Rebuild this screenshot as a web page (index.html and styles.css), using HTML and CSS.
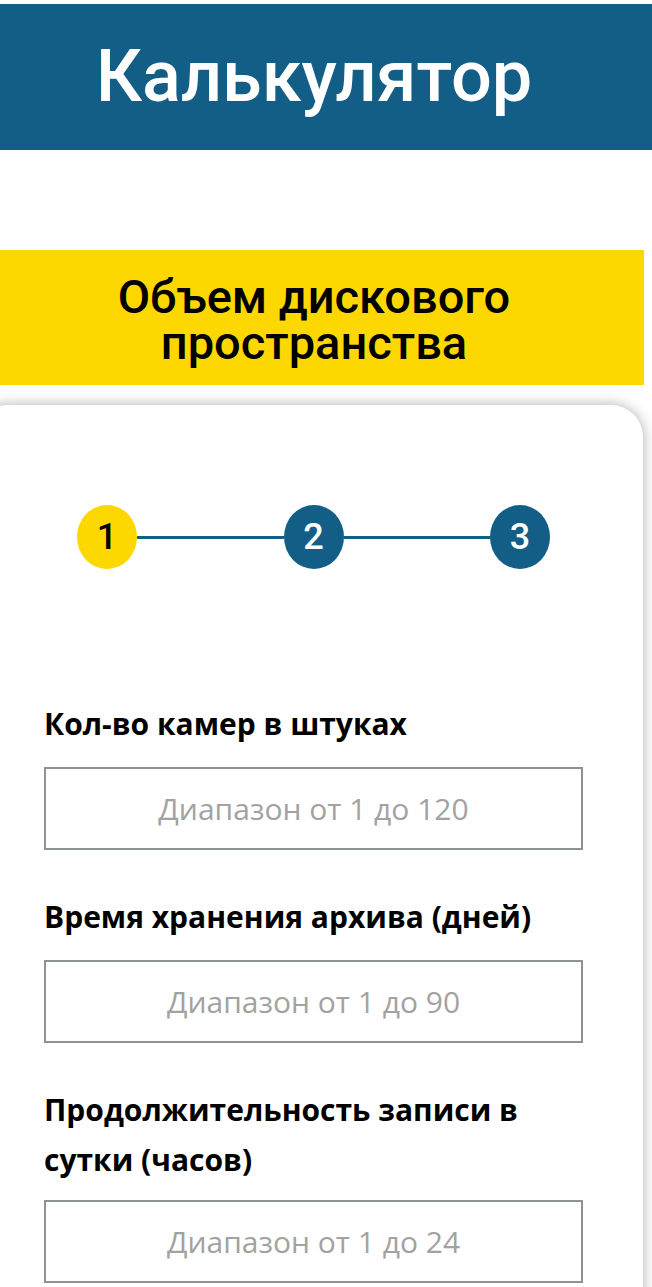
FILE: index.html
```html
<!DOCTYPE html>
<html lang="ru">
<head>
<meta charset="utf-8">
<title>Калькулятор</title>
<link rel="stylesheet" href="styles.css">
</head>
<body>
<header class="topbar">
  <h1 class="topbar__title">Калькулятор</h1>
</header>
<section class="banner">
  <h2 class="banner__title">Объем дискового<br>пространства</h2>
</section>
<main class="card">
  <div class="steps">
    <span class="step step--active">1</span>
    <span class="step__line"></span>
    <span class="step">2</span>
    <span class="step__line"></span>
    <span class="step">3</span>
  </div>
  <form class="form">
    <div class="field">
      <label class="field__label" for="cams">Кол-во камер в штуках</label>
      <input class="field__input" id="cams" type="text" placeholder="Диапазон от 1 до 120">
    </div>
    <div class="field">
      <label class="field__label" for="days">Время хранения архива (дней)</label>
      <input class="field__input" id="days" type="text" placeholder="Диапазон от 1 до 90">
    </div>
    <div class="field">
      <label class="field__label" for="hours">Продолжительность записи в сутки (часов)</label>
      <input class="field__input" id="hours" type="text" placeholder="Диапазон от 1 до 24">
    </div>
  </form>
</main>
</body>
</html>
```
FILE: styles.css
```css
* { box-sizing: border-box; }
html, body { margin: 0; padding: 0; background: #ffffff; overflow: hidden; }
body { font-family: "Open Sans", "Noto Sans", sans-serif; color: #000; }

.topbar {
  margin-top: 4px;
  height: 146px;
  background: #135e86;
  display: flex;
  align-items: center;
  justify-content: center;
  padding-right: 24px;
}
.topbar__title {
  margin: 0;
  font-family: Roboto, "Liberation Sans", sans-serif;
  font-weight: 500;
  font-size: 72px;
  line-height: 1;
  color: #ffffff;
}

.banner {
  margin-top: 100px;
  width: 644px;
  height: 135px;
  background: #fdd700;
  display: flex;
  align-items: center;
  justify-content: center;
  padding-right: 16px;
}
.banner__title {
  margin: 0;
  padding-top: 4px;
  font-family: Roboto, "Liberation Sans", sans-serif;
  font-weight: 500;
  font-size: 47px;
  line-height: 46px;
  text-align: center;
  color: #000;
}

.card {
  margin-top: 20px;
  margin-left: -24px;
  width: 667px;
  min-height: 900px;
  background: #fff;
  border-radius: 32px 32px 0 0;
  box-shadow: 0 0 14px rgba(0, 0, 0, 0.32);
  padding: 100px 0 0 68px;
}

.steps {
  display: flex;
  align-items: center;
  width: 473px;
  margin-left: 33px;
}
.step {
  flex: none;
  width: 60px;
  height: 64px;
  border-radius: 50%;
  background: #135e86;
  color: #fff;
  display: flex;
  align-items: center;
  justify-content: center;
  font-family: Roboto, "Liberation Sans", sans-serif;
  font-weight: 500;
  font-size: 36px;
}
.step--active { background: #fdd700; color: #000; }
.step__line {
  flex: 1;
  height: 3px;
  background: #135e86;
}

.form { margin-top: 130px; width: 539px; }
.field { margin-bottom: 42px; }
.field__label {
  display: block;
  font-family: "Open Sans", "Noto Sans", sans-serif;
  font-weight: 700;
  font-size: 30px;
  line-height: 50px;
  margin-bottom: 18px;
  padding-right: 10px;
}
.field:last-child .field__label { margin-bottom: 15px; }
.field__input {
  display: block;
  width: 539px;
  height: 83px;
  border: 2px solid #8d9295;
  border-radius: 0;
  background: #fff;
  font-family: "Open Sans", "Noto Sans", sans-serif;
  font-size: 30px;
  text-align: center;
  outline: none;
  padding: 0 10px;
}
.field__input::placeholder { color: #a2a2a2; }
```
